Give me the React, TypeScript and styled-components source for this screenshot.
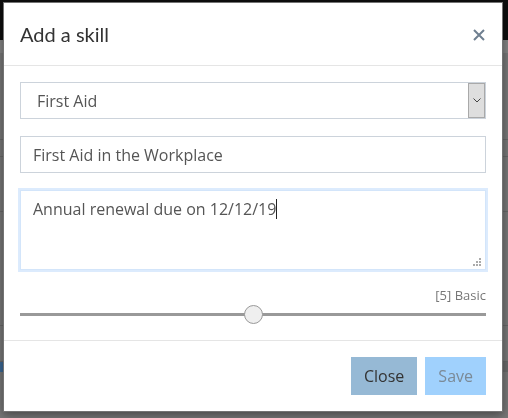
import { useState } from "react";
import styled, { createGlobalStyle } from "styled-components";

const SKILL_LEVELS = ["", "", "", "", "", "Basic", "", "", "", "", ""];

const GlobalStyle = createGlobalStyle`
  html, body {
    margin: 0;
    padding: 0;
  }
  body {
    font-family: "Open Sans", "Liberation Sans", sans-serif;
    background: #777;
    overflow: hidden;
  }
  * {
    box-sizing: border-box;
  }
`;

export default function App() {
  const [level, setLevel] = useState(5);
  return (
    <>
      <GlobalStyle />
      <BackPage>
        <TopBar />
        <SubBar />
        <BackRow $height={87} />
        <BackRow $height={17} />
        <BackRow $height={55} />
        <BackRow $height={114} />
        <BackRow $height={36} />
        <AccentRow />
      </BackPage>
      <Overlay>
        <Modal>
          <Header>
            <Title>Add a skill</Title>
            <CloseX aria-label="Close">
              <svg width="12" height="12" viewBox="0 0 12 12">
                <path
                  d="M1 1 L11 11 M11 1 L1 11"
                  stroke="#6f7f90"
                  strokeWidth="2"
                  fill="none"
                />
              </svg>
            </CloseX>
          </Header>
          <Body>
            <SelectBox>
              <Select defaultValue="first-aid">
                <option value="first-aid">First Aid</option>
                <option value="fire">Fire Warden</option>
              </Select>
              <ArrowBox>
                <svg width="8" height="5" viewBox="0 0 8 5">
                  <path d="M0.5 0.5 L4 4 L7.5 0.5" stroke="#444" fill="none" />
                </svg>
              </ArrowBox>
            </SelectBox>
            <TextInput defaultValue="First Aid in the Workplace" />
            <NoteBox role="textbox">
              Annual renewal due on 12/12/19
              <Caret />
              <Grip width="10" height="10" viewBox="0 0 10 10">
                <rect x="7" y="1" width="2" height="2" fill="#aaa" />
                <rect x="4" y="4" width="2" height="2" fill="#aaa" />
                <rect x="7" y="4" width="2" height="2" fill="#aaa" />
                <rect x="1" y="7" width="2" height="2" fill="#aaa" />
                <rect x="4" y="7" width="2" height="2" fill="#aaa" />
                <rect x="7" y="7" width="2" height="2" fill="#aaa" />
              </Grip>
            </NoteBox>
            <LevelLabel>
              [{level}] {SKILL_LEVELS[level] || "Basic"}
            </LevelLabel>
            <Range
              min={0}
              max={10}
              value={level}
              onChange={(e) => setLevel(Number(e.target.value))}
            />
          </Body>
          <Footer>
            <Button $variant="close">Close</Button>
            <Button $variant="save">Save</Button>
          </Footer>
        </Modal>
      </Overlay>
    </>
  );
}

const BackPage = styled.div`
  display: flex;
  flex-direction: column;
  min-height: 100vh;
`;

const TopBar = styled.div`
  height: 40px;
  background: #0e0e0e;
`;

const SubBar = styled.div`
  height: 13px;
  background: #838383;
`;

const BackRow = styled.div<{ $height: number }>`
  height: ${(p) => p.$height}px;
  border-bottom: 1px solid #676767;
`;

const AccentRow = styled.div`
  height: 10px;
  background: #6a6a6a;
  border-left: 4px solid #3b6793;
`;

const Overlay = styled.div`
  position: fixed;
  inset: 0;
  padding: 2px 0 0 3px;
`;

const Modal = styled.div`
  width: 500px;
  background: #fff;
  border: 1px solid rgba(0, 0, 0, 0.55);
  box-shadow: 0 3px 9px rgba(0, 0, 0, 0.4);
  display: flex;
  flex-direction: column;
`;

const Header = styled.div`
  display: flex;
  align-items: center;
  justify-content: space-between;
  height: 63px;
  padding: 0 16px 1px 16px;
  border-bottom: 1px solid #e5e5e5;
`;

const Title = styled.h4`
  margin: 0;
  font-family: Lato, "Open Sans", sans-serif;
  font-weight: 400;
  font-size: 20px;
  line-height: 28px;
  color: #333;
`;

const CloseX = styled.button`
  border: 0;
  background: none;
  padding: 0;
  margin-right: 1px;
  margin-top: 3px;
  display: flex;
  cursor: pointer;
`;

const Body = styled.div`
  display: flex;
  flex-direction: column;
  padding: 16px 16px 16px;
`;

const SelectBox = styled.div`
  display: flex;
  height: 37px;
  border: 1px solid #ccd3db;
  background: #fff;
`;

const Select = styled.select`
  flex: 1;
  appearance: none;
  border: 0;
  outline: none;
  background: transparent;
  padding: 0 0 0 16px;
  font-family: "Open Sans", sans-serif;
  font-size: 16px;
  color: #555;
`;

const ArrowBox = styled.div`
  width: 17px;
  display: flex;
  align-items: center;
  justify-content: center;
  background: #dedede;
  border: 1px solid #a9a9a9;
`;

const TextInput = styled.input`
  margin-top: 17px;
  height: 37px;
  border: 1px solid #ccd3db;
  padding: 0 12px;
  font-family: "Open Sans", sans-serif;
  font-size: 16px;
  color: #555;
  outline: none;
`;

const NoteBox = styled.div`
  position: relative;
  margin-top: 17px;
  height: 80px;
  border: 1px solid #d3e5fa;
  box-shadow: 0 0 0 2px #dcebfd;
  padding: 7px 12px;
  font-size: 16px;
  line-height: 23px;
  color: #555;
`;

const Caret = styled.span`
  display: inline-block;
  width: 1px;
  height: 20px;
  background: #222;
  vertical-align: -4px;
`;

const Grip = styled.svg`
  position: absolute;
  right: 3px;
  bottom: 2px;
`;

const LevelLabel = styled.div`
  margin-top: 16px;
  text-align: right;
  font-size: 13px;
  line-height: 18px;
  color: #777;
`;

const Range = styled.input.attrs({ type: "range" })`
  -webkit-appearance: none;
  appearance: none;
  width: 100%;
  height: 19px;
  margin: 1px 0 0;
  background: transparent;
  &::-webkit-slider-runnable-track {
    height: 3px;
    background: #999;
  }
  &::-webkit-slider-thumb {
    -webkit-appearance: none;
    width: 19px;
    height: 19px;
    margin-top: -8px;
    border-radius: 50%;
    background: #efefef;
    border: 1px solid #999;
    box-sizing: border-box;
  }
  &:focus {
    outline: none;
  }
`;

const Footer = styled.div`
  display: flex;
  justify-content: flex-end;
  gap: 8px;
  padding: 16px;
  border-top: 1px solid #e5e5e5;
`;

const Button = styled.button<{ $variant: "close" | "save" }>`
  height: 38px;
  padding: 0 13px;
  border: 0;
  font-family: "Open Sans", sans-serif;
  font-size: 16px;
  background: ${(p) => (p.$variant === "close" ? "#96b9d5" : "#a0d1fd")};
  color: ${(p) => (p.$variant === "close" ? "#333" : "#7b8a97")};
  cursor: pointer;
`;
